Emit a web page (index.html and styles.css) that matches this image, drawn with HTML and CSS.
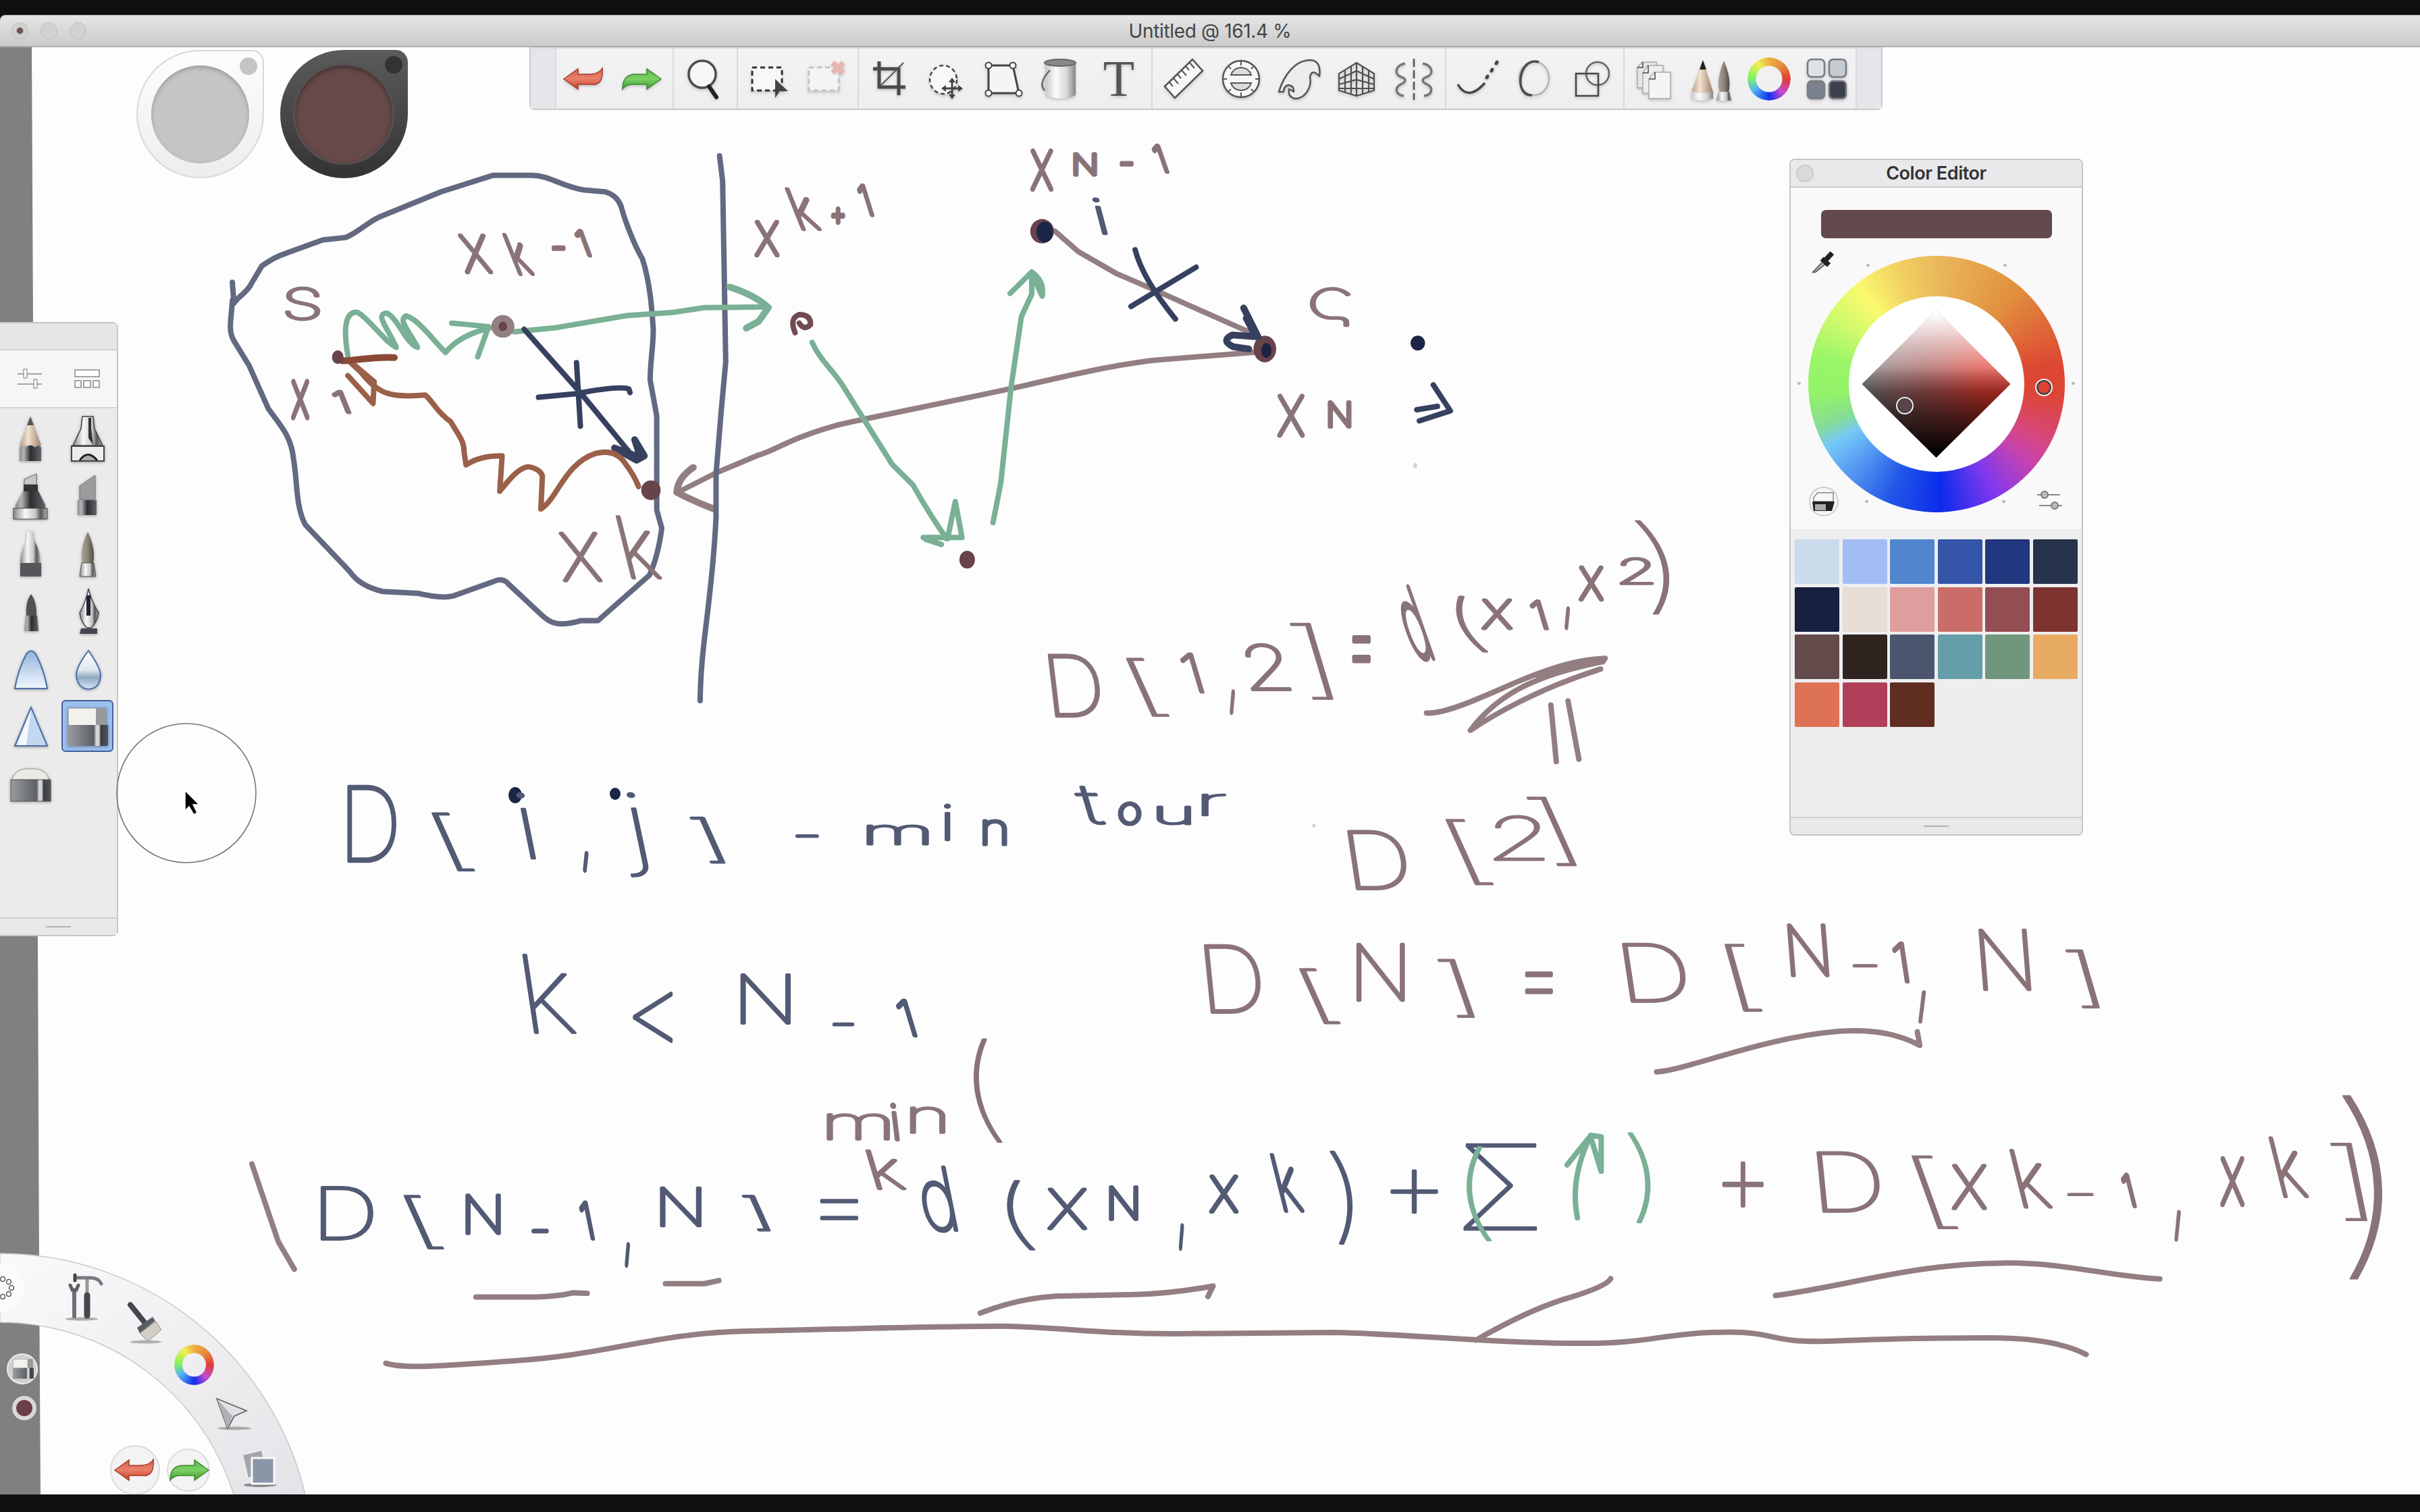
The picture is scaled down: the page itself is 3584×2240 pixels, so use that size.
FILE: index.html
```html
<!DOCTYPE html>
<html lang="en">
<head>
<meta charset="utf-8">
<title>Untitled @ 161.4 %</title>
<link rel="stylesheet" href="styles.css">
</head>
<body>
<svg class="defs" width="0" height="0" aria-hidden="true">
  <defs>
    <linearGradient id="red" x1="0" y1="0" x2="0" y2="1"><stop offset="0" stop-color="#d9604c"/><stop offset=".5" stop-color="#e8806a"/><stop offset="1" stop-color="#c93c2a"/></linearGradient>
    <linearGradient id="green" x1="0" y1="0" x2="0" y2="1"><stop offset="0" stop-color="#58b548"/><stop offset=".5" stop-color="#7cd064"/><stop offset="1" stop-color="#3c9a2c"/></linearGradient>
    <linearGradient id="metal"><stop offset="0" stop-color="#8a8a8c"/><stop offset=".35" stop-color="#f8f8f8"/><stop offset=".65" stop-color="#c6c6c8"/><stop offset=".8" stop-color="#58585a"/><stop offset="1" stop-color="#b0b0b2"/></linearGradient>
    <linearGradient id="can"><stop offset="0" stop-color="#c8c8ca"/><stop offset=".35" stop-color="#fbfbfb"/><stop offset=".7" stop-color="#d8d8da"/><stop offset="1" stop-color="#858587"/></linearGradient>
    <linearGradient id="dark"><stop offset="0" stop-color="#8b8d92"/><stop offset=".2" stop-color="#b4b4b6"/><stop offset=".5" stop-color="#2c2d30"/><stop offset="1" stop-color="#636468"/></linearGradient>
    <linearGradient id="rubber"><stop offset="0" stop-color="#9a9ca0"/><stop offset=".65" stop-color="#5c5f65"/><stop offset=".71" stop-color="#d8d8d8"/><stop offset=".78" stop-color="#d0d0d0"/><stop offset=".82" stop-color="#3c3e43"/><stop offset="1" stop-color="#4f5258"/></linearGradient>
    <linearGradient id="wood"><stop offset="0" stop-color="#b9a088"/><stop offset=".4" stop-color="#f2e2cf"/><stop offset="1" stop-color="#a07f66"/></linearGradient>
    <linearGradient id="hair"><stop offset="0" stop-color="#a9a196"/><stop offset=".5" stop-color="#8a8378"/><stop offset="1" stop-color="#4f4a44"/></linearGradient>
    <linearGradient id="blue" x1="0" y1="0" x2="0" y2="1"><stop offset="0" stop-color="#92b3dc"/><stop offset="1" stop-color="#f2f7fc"/></linearGradient>
    <linearGradient id="drop" x1="0" y1="0" x2="0" y2="1"><stop offset="0" stop-color="#ffffff"/><stop offset=".5" stop-color="#dfe8f0"/><stop offset=".7" stop-color="#8fa9c2"/><stop offset="1" stop-color="#dde9f5"/></linearGradient>
    <linearGradient id="band" x1="0" y1="0" x2="1" y2="1"><stop offset="0" stop-color="#fafafb"/><stop offset="1" stop-color="#e4e4e8"/></linearGradient>
    <symbol id="undo" viewBox="0 0 60 60"><path d="M1 30 L22 15 V23 H40 Q54 22 58 14 Q60 40 42 38 H22 V45 Z" fill="url(#red)" stroke="#a83a2c" stroke-width="1.5"/></symbol>
    <symbol id="redo" viewBox="0 0 60 60"><path d="M59 30 L38 15 V23 H20 Q2 24 2 45 Q8 37 20 38 H38 V45 Z" fill="url(#green)" stroke="#3c8a30" stroke-width="1.5"/></symbol>
    <symbol id="eraser" viewBox="0 0 60 60"><rect x="1" y="3" width="56" height="28" fill="#f3f1ec" stroke="#8a8a8a"/><rect x="42" y="3" width="15" height="28" fill="#99999b"/><rect y="28" width="60" height="31" fill="url(#rubber)"/></symbol>
  </defs>
</svg>

<main class="screen">
  <header class="titlebar">
    <div class="lights"><i class="light edited"></i><i class="light"></i><i class="light"></i></div>
    <h1 class="doc-title">Untitled @ 161.4 %</h1>
  </header>

  <section class="workspace">
    <svg class="sketch" viewBox="0 70 3584 2144">
      <path class="pasteboard" d="M0 70 H47 L49 480 L56 1400 L58 1880 L60 2214 H0 Z"/>
      <g transform="translate(1000 200) scale(.7653 .5485)">
        <path class="pen plum" d="M1120 587 L930 608 C850 620 760 650 650 685 C500 730 350 770 310 785 C220 820 190 855 160 865 L80 912 L5 965 M735 260 L780 315 L855 375 L930 420 L1120 538"/>
        <path class="pen plum bold" d="M35 898 Q5 925 3 965 Q40 992 75 1010"/>
        <path class="pen green" d="M265 560 C280 610 310 640 330 690 L420 890 L460 945 Q490 1020 525 1090 M480 1087 H555 L542 990 L527 1090 M485 1092 L515 1106 M615 1047 L630 940 L650 680 L670 490 L690 430 V370 M648 428 L690 370 Q715 395 710 435 L690 375"/>
      </g>
      <g transform="translate(320 220) scale(.574 .5357)">
        <path class="pen navy" d="M42 370 L46 428 C60 405 80 400 92 372 L118 325 Q150 300 180 290 L275 253 L335 246 C370 230 390 205 420 190 L580 120 L715 74 H815 C860 74 890 105 950 115 L1005 120 Q1035 130 1045 160 C1055 200 1080 270 1100 305 C1120 370 1125 450 1128 500 C1128 550 1120 590 1120 640 L1137 740 V1000 L1150 1050 Q1140 1130 1118 1180 L985 1306 H940 C880 1325 860 1310 840 1290 L755 1205 Q740 1185 715 1198 L610 1238 Q580 1245 520 1230 L430 1225 Q370 1210 345 1170 L230 1040 C205 990 210 920 200 860 C195 800 170 770 135 720 L85 600 L45 530 C30 500 40 470 42 420"/>
        <path class="pen navy" d="M1299 20 L1307 90 L1315 590 L1303 730 L1290 900 V1020 C1280 1250 1250 1370 1249 1527"/>
        <path class="pen green" d="M340 572 C325 480 340 450 365 453 C395 470 430 530 465 550 C440 490 410 460 440 455 C470 470 490 540 520 550 C495 500 470 475 490 463 C520 470 560 530 592 564 Q630 515 705 497 M608 483 L650 487 L703 493 L675 576 M770 507 L880 495 L1060 462 L1180 453 L1260 440 L1420 438"/>
        <path class="pen green bold" d="M1325 383 Q1390 405 1425 440 L1400 478 L1368 497"/>
        <path class="pen navy-dark" d="M795 500 L940 675 L1065 838 M930 592 L940 768 M832 688 L930 678 Q1040 655 1065 665 L1068 675"/>
        <path class="pen navy-dark bold" d="M1028 828 L1095 855 L1080 805 L1105 850 L1085 862 Z"/>
        <path class="pen brown" d="M345 590 L375 620 C420 680 450 690 540 682 C560 700 570 730 605 755 C630 800 640 810 640 840 L645 875 C680 850 720 850 738 850 L732 948 C760 910 780 885 805 880 Q835 885 842 905 L838 997 C880 970 900 870 980 843 Q1030 830 1055 870 Q1080 905 1090 935 M340 628 L405 705 L408 645 L345 588"/>
        <path class="pen brown bold" d="M460 578 C400 575 360 587 325 587"/>
        <ellipse class="pen plum bold" cx="740" cy="492" rx="21" ry="22"/>
        <ellipse class="dot plum-dark" cx="740" cy="492" rx="12" ry="13"/>
        <ellipse class="dot plum-dark" cx="314" cy="577" rx="15" ry="19"/>
        <ellipse class="dot plum-dark" cx="1122" cy="945" rx="25" ry="27"/>
      </g>
      <g transform="translate(1000 200) scale(.7653 .5485)">
        <path class="pen plum-dark" d="M232 534 Q220 495 240 485 Q262 485 262 512 Q250 530 240 508"/>
        <ellipse class="dot plum-dark" cx="565" cy="1147" rx="15" ry="24"/>
        <ellipse class="dot plum-dark" cx="710" cy="260" rx="23" ry="33"/>
        <ellipse class="dot navy-dark" cx="715" cy="262" rx="16" ry="28"/>
        <ellipse class="dot plum-dark" cx="1141" cy="578" rx="22" ry="36"/>
        <ellipse class="dot navy-dark" cx="1144" cy="582" rx="10" ry="20"/>
        <ellipse class="dot navy-dark" cx="1437" cy="562" rx="14" ry="20"/>
        <ellipse class="dot faint" cx="1432" cy="893" rx="4" ry="7"/>
        <path class="pen navy-dark" d="M890 310 Q905 390 968 497 M882 463 L1008 357 M1435 742 L1475 733 M1440 772 L1500 745 L1467 675"/>
        <path class="pen navy-dark bold" d="M1100 467 L1128 545 L1078 540 Q1055 555 1080 572 L1110 578 M1105 495 L1120 535"/>
      </g>
      <path class="pen plum" transform="translate(1500 740) scale(.6696 .3954)" d="M915 800 C960 805 1050 730 1120 680 C1200 625 1250 600 1310 595 L1305 608 C1180 650 1080 710 1012 865 C1060 810 1160 710 1300 635 M1160 660 Q1240 615 1300 602 M1190 770 L1202 982 M1228 755 L1252 973"/>
      <path class="pen plum" transform="translate(360 1500) scale(1.0842 .3571)" d="M195 1455 C220 1480 280 1465 370 1445 C500 1420 560 1330 690 1322 C850 1310 1000 1300 1050 1302 C1130 1310 1170 1333 1275 1333 M318 1180 H400 Q430 1178 450 1163 L470 1165 M577 1125 H630 L650 1112 M1007 1247 Q1060 1185 1110 1177 L1220 1170 Q1270 1165 1325 1135 L1318 1178 M12 628 L48 950 L70 1065"/>
      <g transform="translate(1740 1320) scale(1.1735 .4719)">
        <path class="pen plum" d="M0 1390 L200 1386 C290 1390 400 1420 520 1420 C600 1420 620 1385 700 1385 C760 1385 750 1420 830 1413 C900 1405 960 1403 1030 1403 Q1110 1403 1150 1455 M608 568 C650 560 740 460 840 440 Q900 430 940 485 L937 442 M758 1270 C850 1240 930 1170 1045 1168 C1120 1165 1180 1210 1243 1218 M380 1410 Q450 1310 500 1275 Q545 1240 550 1217"/>
        <path class="pen green" d="M508 1026 Q498 900 525 767 L495 860 M525 767 L538 772 V880 L525 775"/>
      </g>
      <ellipse class="dot navy-dark" cx="763" cy="1178" rx="10" ry="12"/>
      <ellipse class="dot navy-dark" cx="911" cy="1176" rx="8" ry="9"/>
      <ellipse class="dot faint" cx="1946" cy="1223" rx="2.5" ry="3"/>
      <g id="writing" transform="scale(2.2857)"></g>
    </svg>

    <div class="puck puck-light"><i class="puck-dot"></i><i class="puck-well"></i></div>
    <div class="puck puck-dark"><i class="puck-dot"></i><i class="puck-well"></i></div>

    <nav class="toolbar">
      <div class="grip"></div>
      <div class="group g1">
        <svg viewBox="0 0 64 64"><use href="#undo" x="2" y="2" width="60" height="60"/></svg>
        <svg viewBox="0 0 64 64"><use href="#redo" x="2" y="2" width="60" height="60"/></svg>
      </div>
      <div class="group g2">
        <svg viewBox="0 0 64 64"><circle cx="30" cy="25" r="20" fill="#f6f6f8" stroke="#4c4c4c" stroke-width="3.5"/><path d="M40 43 L51 59" stroke="#222" stroke-width="6" stroke-linecap="round"/></svg>
      </div>
      <div class="group g3">
        <svg viewBox="0 0 64 64"><rect x="9" y="15" width="44" height="34" fill="#f8f8f8" stroke="#333" stroke-width="3" stroke-dasharray="7 5"/><path d="M43 32 V60 L50 50 H62 Z" fill="#444"/></svg>
        <svg viewBox="0 0 64 64"><rect x="8" y="15" width="44" height="34" fill="#f4f4f4" stroke="#c4c4c4" stroke-width="3" stroke-dasharray="7 5"/><path d="M43 8 L59 23 M59 8 L43 23" stroke="#e5b6b2" stroke-width="8"/></svg>
      </div>
      <div class="group g4">
        <svg viewBox="0 0 64 64"><path d="M18 6 V44 H57 M9 17 H47 V56" fill="none" stroke="#4a4a4a" stroke-width="5"/><path d="M20 42 L54 8" stroke="#555" stroke-width="2"/></svg>
        <svg viewBox="0 0 64 64"><ellipse cx="27" cy="33" rx="20" ry="21" fill="#f8f8f8" stroke="#444" stroke-width="2.5" stroke-dasharray="6 4"/><path d="M40 32 V60 M26 46 H54" stroke="#444" stroke-width="3"/><path d="M40 30 L35 37 H45Z M40 62 L35 55 H45Z M24 46 L31 41 V51Z M56 46 L49 41 V51Z" fill="#444"/></svg>
        <svg viewBox="0 0 64 64"><path d="M9 12 H45 L54 53 H9 Z" fill="#f5f5f6" stroke="#444" stroke-width="3"/><g fill="#fff" stroke="#444" stroke-width="2"><circle cx="9" cy="12" r="4.5"/><circle cx="45" cy="12" r="4.5"/><circle cx="54" cy="53" r="4.5"/><circle cx="9" cy="53" r="4.5"/></g></svg>
        <svg viewBox="0 0 64 64"><path d="M8 8 V56 Q30 66 53 56 V8 Z" fill="url(#can)"/><ellipse cx="30" cy="8" rx="23" ry="5" fill="#888" stroke="#666" stroke-width="2"/><path d="M15 19 Q-3 38 7 49" fill="none" stroke="#666" stroke-width="2.5"/></svg>
        <svg viewBox="0 0 64 64"><text class="type-glyph" x="31" y="57" text-anchor="middle">T</text></svg>
      </div>
      <div class="group g5">
        <svg viewBox="0 0 64 64"><path d="M4 43 L45 3 L60 20 L19 60 Z" fill="#f8f8f8" stroke="#555" stroke-width="2.5"/><path d="M11 37 l5 6 M17 31 l7 8 M23 25 l5 6 M29 19 l7 8 M35 13 l5 6 M41 8 l7 8" stroke="#555" stroke-width="2"/></svg>
        <svg viewBox="0 0 64 64"><circle cx="32" cy="32" r="27" fill="#f7f7f8" stroke="#555" stroke-width="2.5"/><path d="M17 26 Q20 16 32 15 Q44 16 47 26 Z M17 38 Q20 48 32 49 Q44 48 47 38 Z" fill="#ddd" stroke="#555" stroke-width="2"/><path d="M32 6 V12 M32 52 V58 M6 32 H11 M53 32 H58 M14 14 l3 3 M50 14 l-3 3 M14 50 l3 -3 M50 50 l-3 -3" stroke="#555" stroke-width="2"/></svg>
        <svg viewBox="0 0 64 64"><path d="M3 51 C10 28 26 4 50 4 Q66 5 63 28 C56 20 50 20 49 30 C52 42 43 62 26 61 Q16 58 18 47 L25 51 Q26 42 17 41 Q10 43 10 51 Z" fill="#ececee" stroke="#555" stroke-width="2.5" stroke-linejoin="round"/></svg>
        <svg viewBox="0 0 64 64"><path d="M32 8 L58 24 V49 L32 57 L6 49 V24 Z M32 8 V57 M15 20 V51 M24 14 V54 M41 14 V54 M50 20 V51 M6 32 L32 20 L58 32 M6 40 L32 33 L58 40 M6 46 H58" fill="none" stroke="#505052" stroke-width="2.2"/></svg>
        <svg viewBox="0 0 64 64"><path d="M19 9 C4 12 2 25 13 29 C22 32 20 37 12 40 C2 46 6 56 17 57 M45 9 C60 12 62 25 51 29 C42 32 44 37 52 40 C62 46 58 56 47 57" fill="none" stroke="#777" stroke-width="3.5"/><path d="M32 2 V63" stroke="#555" stroke-width="2.5" stroke-dasharray="12 5"/></svg>
      </div>
      <div class="group g6">
        <svg viewBox="0 0 64 64"><path d="M3 40 Q18 66 43 38" fill="none" stroke="#444" stroke-width="3.5"/><path d="M46 30 L47 28 M53 20 L54 18 M60 9 L61 7" stroke="#444" stroke-width="5" stroke-linecap="round"/></svg>
        <svg viewBox="0 0 64 64"><ellipse cx="31" cy="31" rx="22" ry="25" fill="none" stroke="#aaa" stroke-width="2"/><path d="M38 7 C8 -2 0 58 28 56" fill="none" stroke="#4c4c4e" stroke-width="3.5"/></svg>
        <svg viewBox="0 0 64 64"><circle cx="40" cy="24" r="17" fill="none" stroke="#666" stroke-width="2.5"/><rect x="8" y="24" width="33" height="33" fill="none" stroke="#444" stroke-width="2.5"/></svg>
      </div>
      <div class="group g7">
        <svg viewBox="0 0 64 64"><g stroke="#aaa" stroke-width="1.5"><path d="M8 15 L15 7 H36 V45 H8Z" fill="#e5e5e8"/><path d="M16 23 L23 12 H46 V53 H16Z" fill="#ededf0"/><path d="M25 32 L33 22 H57 V61 H25Z" fill="#f5f5f8"/></g><path d="M8 15 h8 V7 M16 23 h8 V12 M25 32 h9 V22" fill="none" stroke="#444" stroke-width="1.5"/></svg>
        <svg viewBox="0 0 64 64"><path d="M19 4 L2 51 Q2 62 18 64 Q33 63 34 51 Z" fill="url(#wood)"/><path d="M19 4 L14 18 H24 Z" fill="#222"/><path d="M2 50 Q18 56 34 50 V61 Q18 67 2 61Z" fill="url(#can)"/><path d="M50 5 Q38 35 44 52 H57 Q62 33 50 5Z" fill="url(#hair)"/><path d="M42 51 H58 L62 64 H39Z" fill="url(#metal)"/></svg>
        <i class="hue-ring"></i>
        <svg viewBox="0 0 64 64"><g stroke="#777b80" stroke-width="2.5"><rect x="4" y="3" width="25" height="26" rx="6" fill="#dfe3e5"/><rect x="36" y="3" width="25" height="26" rx="6" fill="#c5cbd0"/><rect x="4" y="35" width="25" height="26" rx="6" fill="#7b828d"/><rect x="36" y="35" width="25" height="26" rx="6" fill="#3c404b"/></g></svg>
      </div>
      <div class="grip"></div>
    </nav>

    <aside class="brushes">
      <div class="brushes-head"></div>
      <div class="brushes-tabs">
        <svg viewBox="0 0 40 32"><path d="M2 9 H38 M2 24 H38" stroke="#8a8a8a" stroke-width="1.5"/><rect x="11" y="2" width="5" height="13" fill="#fff" stroke="#777"/><rect x="26" y="17" width="5" height="13" fill="#fff" stroke="#777"/></svg>
        <svg viewBox="0 0 40 32"><g fill="#fff" stroke="#888" stroke-width="1.5"><rect x="2" y="3" width="36" height="10"/><rect x="2" y="19" width="9" height="10"/><rect x="15" y="19" width="10" height="10"/><rect x="29" y="19" width="9" height="10"/></g></svg>
      </div>
      <div class="brushes-grid">
        <div class="cell"><svg viewBox="0 0 64 70"><path d="M32 2 L16 45 H48Z" fill="url(#wood)"/><path d="M32 2 L27 15 H37Z" fill="#555"/><path d="M16 48 Q21 42 25 48 Q32 41 39 48 Q44 42 48 48 V68 H16Z" fill="url(#dark)"/></svg></div>
        <div class="cell"><svg viewBox="0 0 64 70"><path d="M24 2 H40 L42 20 L54 45 H10 L22 20Z" fill="url(#metal)" stroke="#444" stroke-width="1.5"/><path d="M33 4 V34 L40 44 L37 20 V4Z" fill="#333"/><path d="M8 46 H56 V68 H8Z" fill="#ececec" stroke="#444" stroke-width="2"/><path d="M20 67 Q32 50 46 67" fill="#aaa" stroke="#222" stroke-width="3"/></svg></div>
        <div class="cell"><svg viewBox="0 0 64 70"><path d="M23 10 L41 2 V18 H23Z" fill="#c9c8c0" stroke="#666"/><path d="M22 18 H43 V28 H22Z" fill="#333"/><path d="M21 28 H44 L54 48 V53 H10 V48Z" fill="url(#dark)"/><path d="M7 53 H57 V69 H7Z" fill="url(#metal)" stroke="#444"/></svg></div>
        <div class="cell"><svg viewBox="0 0 64 70"><path d="M20 20 L43 4 V40 H20Z" fill="#9a9c9e" stroke="#777"/><path d="M17 41 H45 V63 H17Z" fill="url(#dark)"/></svg></div>
        <div class="cell"><svg viewBox="0 0 64 70"><path d="M27 2 H36 L38 16 Q47 32 47 50 H17 Q17 32 26 16Z" fill="url(#metal)"/><path d="M17 49 H48 V69 H17Z" fill="#55565a"/></svg></div>
        <div class="cell"><svg viewBox="0 0 64 70"><path d="M32 3 Q20 28 24 49 H40 Q44 28 32 3Z" fill="url(#hair)"/><path d="M23 49 H41 L44 69 H20Z" fill="url(#metal)" stroke="#555"/></svg></div>
        <div class="cell"><svg viewBox="0 0 64 70"><path d="M33 10 Q24 22 26 43 H41 Q42 22 33 10Z" fill="#505256"/><path d="M25 42 H42 L44 65 H23Z" fill="url(#dark)"/></svg></div>
        <div class="cell"><svg viewBox="0 0 64 70"><path d="M33 2 Q30 20 20 38 Q22 52 31 60 H37 Q46 52 48 38 Q37 20 33 2Z" fill="url(#metal)" stroke="#445" stroke-width="1.5"/><path d="M33 12 V42" stroke="#223" stroke-width="6"/><path d="M22 61 H46 V69 H20Z" fill="#45464f"/></svg></div>
        <div class="cell"><svg viewBox="0 0 64 70"><path d="M9 64 Q14 36 26 13 Q33 4 40 13 Q52 36 57 64Z" fill="url(#blue)" stroke="#4a6ea8" stroke-width="2"/></svg></div>
        <div class="cell"><svg viewBox="0 0 64 70"><path d="M33 8 Q15 32 15 44 Q17 64 33 65 Q50 64 51 44 Q50 32 33 8Z" fill="url(#drop)" stroke="#4a6ea8" stroke-width="2"/></svg></div>
        <div class="cell"><svg viewBox="0 0 64 70"><path d="M33 7 L9 64 H57Z" fill="#c3d7f0" stroke="#4a6ea8" stroke-width="2"/><path d="M33 10 L12 63 H26Z" fill="#f4f8fd"/></svg></div>
        <div class="cell selected"><svg viewBox="0 0 64 70"><use href="#eraser" x="2" y="5" width="60" height="60"/></svg></div>
        <div class="cell"><svg viewBox="0 0 64 70"><path d="M4 30 Q10 14 25 13 H40 Q56 15 60 30Z" fill="#eceae6" stroke="#999"/><rect x="3" y="29" width="59" height="32" fill="url(#rubber)" stroke="#555"/></svg></div>
      </div>
      <div class="panel-foot"></div>
    </aside>

    <svg class="brush-cursor" viewBox="0 0 210 210"><circle cx="105" cy="105" r="103" fill="none" stroke="#777" stroke-width="1.6"/><path d="M103 101 V131 L109 125 L116 137 L121 134 L115 122 H124 Z" fill="#000" stroke="#fff" stroke-width="1.5"/></svg>

    <section class="editor">
      <header class="editor-head"><i class="editor-close"></i><h2>Color Editor</h2></header>
      <div class="mixer">
        <div class="current"></div>
        <svg class="mix-icon dropper" viewBox="0 0 40 40"><path d="M3 35 L20 17 L24 21 L7 35 Z" fill="#bbb" stroke="#666" stroke-width="2"/><path d="M17 14 L28 24 M22 17 L33 5" stroke="#222" stroke-width="8"/></svg>
        <div class="wheel"><div class="wheel-hole"><div class="diamond"></div></div><i class="knob knob-hue"></i><i class="knob knob-tone"></i></div>
        <svg class="mix-icon clear" viewBox="0 0 48 48"><circle cx="24" cy="24" r="21" fill="#f6f6f6" stroke="#ccc" stroke-width="2"/><path d="M9 18 L15 11 H38 V24 H9Z" fill="#f7f7f7" stroke="#888" stroke-width="1.5"/><path d="M7 24 H40 L36 38 H9Z" fill="#222"/><path d="M11 28 H27 V37 H11Z" fill="#aaa"/></svg>
        <svg class="mix-icon sliders" viewBox="0 0 40 36"><path d="M2 9 H36 M5 25 H39" stroke="#8a8a8a" stroke-width="2"/><circle cx="13" cy="9" r="5" fill="#bbb" stroke="#777" stroke-width="2"/><circle cx="28" cy="25" r="5" fill="#bbb" stroke="#777" stroke-width="2"/></svg>
        <i class="tick t1"></i><i class="tick t2"></i><i class="tick t3"></i><i class="tick t4"></i><i class="tick t5"></i><i class="tick t6"></i>
      </div>
      <div class="swatches">
        <i style="background:#cbdbec"></i><i style="background:#a2bcf5"></i><i style="background:#5186ce"></i><i style="background:#3455a8"></i><i style="background:#20367d"></i><i style="background:#27334a"></i>
        <i style="background:#17203f"></i><i style="background:#e8dcd7"></i><i style="background:#df9d9d"></i><i style="background:#ca6d68"></i><i style="background:#934d53"></i><i style="background:#7d3430"></i>
        <i style="background:#634a4b"></i><i style="background:#302421"></i><i style="background:#4b566e"></i><i style="background:#659ea8"></i><i style="background:#70977c"></i><i style="background:#e7ac62"></i>
        <i style="background:#de7256"></i><i style="background:#b0405a"></i><i style="background:#602e20"></i>
      </div>
      <div class="panel-foot"></div>
    </section>

    <svg class="lagoon" viewBox="0 1850 470 364">
      <path d="M0 1857 A465 465 0 0 1 452 2214 H346 A363 363 0 0 0 0 1959 Z" fill="url(#band)" stroke="#c9c9cc" stroke-width="1.5"/>
      <circle cx="-2" cy="1908" r="37" fill="#fbfbfb"/>
      <g fill="#fff" stroke="#555" stroke-width="1.5"><circle cx="4" cy="1895" r="3.5"/><circle cx="13" cy="1899" r="3.5"/><circle cx="17" cy="1908" r="3.5"/><circle cx="13" cy="1917" r="3.5"/><circle cx="4" cy="1921" r="3.5"/></g>
      <g stroke-linecap="round"><ellipse cx="121" cy="1954" rx="24" ry="2.5" fill="#aaa"/><path d="M110 1912 V1950" stroke="#6d7077" stroke-width="6"/><path d="M104 1904 L107 1911 H113 L116 1904" fill="none" stroke="#5d6066" stroke-width="5"/><path d="M129 1894 V1915" stroke="#999" stroke-width="5"/><path d="M129 1919 V1949" stroke="#45474c" stroke-width="9"/><path d="M112 1893 H134 Q146 1893 150 1902" fill="none" stroke="#777a80" stroke-width="5"/><path d="M111 1889 V1897" stroke="#444" stroke-width="5"/></g>
      <ellipse cx="216" cy="1988" rx="23" ry="2.5" fill="#b0b0b0"/><path d="M193 1933 L214 1959" stroke="#45474c" stroke-width="8" stroke-linecap="round"/><path d="M203 1967 L226 1951 L230 1957 L207 1975Z" fill="#5a5e66"/><path d="M207 1975 L231 1958 L239 1970 L219 1987Z" fill="#d2cfc5" stroke="#8b8982"/>
      <foreignObject x="258" y="1992" width="60" height="64"><i class="hue-ring small"></i></foreignObject>
      <ellipse cx="347" cy="2116" rx="25" ry="2.5" fill="#aaa"/><path d="M321 2072 L365 2090 L347 2098 L337 2116 Z" fill="#dfe0e2" stroke="#666" stroke-width="1.8"/><path d="M321 2072 L344 2098 L337 2116Z" fill="#aeb0b4"/>
      <ellipse cx="385" cy="2200" rx="24" ry="3" fill="#888"/><path d="M359 2155 L388 2148 L396 2185 L367 2190Z" fill="#a3a5ab" stroke="#eee" stroke-width="2"/><path d="M373 2160 H406 V2198 H373Z" fill="#8a95a8" stroke="#fafafa" stroke-width="3"/>
      <circle cx="33" cy="2028" r="22" fill="#d0d0d0" stroke="#ececec" stroke-width="2"/><use href="#eraser" x="19" y="2012" width="31" height="31"/>
      <circle cx="36" cy="2086" r="15" fill="#6b3f45" stroke="#dcd7d9" stroke-width="6"/>
      <circle cx="200" cy="2178" r="36" fill="#f3f3f4" stroke="#dcdcdc" stroke-width="2"/><use href="#undo" x="169" y="2148" width="60" height="60"/>
      <circle cx="279" cy="2178" r="31" fill="#f3f3f4" stroke="#dcdcdc" stroke-width="2"/><use href="#redo" x="250" y="2148" width="60" height="60"/>
    </svg>
  </section>
</main>
<script src="ink.js"></script>
</body>
</html>
```
FILE: styles.css
```css
* { box-sizing: border-box; }
body { margin: 0; background: #101010; font-family: Inter, "Liberation Sans", sans-serif; }
h1, h2 { margin: 0; }
i { display: block; }
.defs { position: absolute; }

.screen { width: 3584px; height: 2240px; padding: 22px 0 26px; display: flex; flex-direction: column; overflow: hidden; background: #101010; }
.titlebar { height: 48px; flex: none; display: flex; align-items: center; justify-content: center; position: relative; background: linear-gradient(#e6e5e6, #cccbcc); border-top: 1px solid #aaa; border-bottom: 2px solid #adadad; border-radius: 8px 0 0 0; }
.lights { position: absolute; left: 17px; top: 10px; display: flex; gap: 18px; }
.light { width: 25px; height: 25px; border: 1.5px solid #bdbcbd; border-radius: 50%; background: #d3d2d3; }
.light.edited { background: radial-gradient(circle, #6b5650 0 4px, #d3d2d3 5.5px); }
.doc-title { font-size: 28px; font-weight: 400; color: #454545; letter-spacing: -.35px; white-space: nowrap; }

.workspace { position: relative; flex: 1; background: #fdfdfe; overflow: hidden; }
.sketch { position: absolute; left: 0; top: 0; width: 3584px; height: 2144px; }
.pasteboard { fill: #808080; }
.pen { fill: none; stroke-width: 8; stroke-linecap: round; stroke-linejoin: round; vector-effect: non-scaling-stroke; }
.pen.bold { stroke-width: 10; }
.pen.navy { stroke: #626980; }
.pen.navy-dark { stroke: #36405f; }
.pen.plum { stroke: #937e81; }
.pen.plum-dark { stroke: #704c52; }
.pen.green { stroke: #7ab095; }
.pen.brown { stroke: #9a6049; }
.pen.brown.bold { stroke: #8a4a34; }
.dot.plum-dark { fill: #68434a; }
.dot.navy-dark { fill: #1c2546; }
.dot.faint { fill: #d4d4dc; }
.hand { font-family: Inter, Roboto, sans-serif; font-size: 100px; font-weight: 100; stroke-linejoin: round; stroke-linecap: round; }
.hand.n { fill: #525a74; stroke: #525a74; }
.hand.p { fill: #8a7377; stroke: #8a7377; }
.hand.g { fill: #7ab095; stroke: #7ab095; }

.puck { position: absolute; top: 4px; width: 189px; height: 190px; border-radius: 50% 18px 50% 50%; }
.puck-light { left: 202px; background: linear-gradient(#fdfdfd, #ededee); border: 2px solid #d8d8d8; }
.puck-dark { left: 415px; background: linear-gradient(#5b5b5b, #333); }
.puck-dot { position: absolute; right: 8px; top: 9px; width: 26px; height: 26px; border-radius: 50%; background: #c5c5c6; }
.puck-well { position: absolute; left: 20px; top: 21px; width: 145px; height: 145px; border-radius: 50%; background: #c7c4c7; box-shadow: inset 0 3px 6px #999; }
.puck-dark .puck-dot { background: #333; }
.puck-dark .puck-well { left: 19px; top: 20px; width: 150px; height: 150px; background: #664949; border: 3px solid #555051; box-shadow: inset 0 3px 6px #402e30; }

.toolbar { position: absolute; left: 784px; top: 0; width: 2004px; height: 93px; display: flex; background: linear-gradient(#f3f3f4, #eeeef0); border: 2px solid #c9c9cb; border-top-color: #dadada; border-radius: 0 0 8px 8px; }
.grip { width: 36px; background: #e6e6ea; }
.group { display: flex; align-items: center; justify-content: center; border-left: 2px solid #d9d9da; }
.group:nth-last-child(2) { border-right: 2px solid #d9d9da; }
.group > svg { width: 64px; height: 64px; margin: 0 10.7px; flex: none; overflow: visible; filter: drop-shadow(0 2px 2px #0003); }
.g1 { width: 174px; padding-right: 6px; } .g2 { width: 95px; padding-right: 4px; } .g3 { width: 179px; padding-right: 4px; } .g4 { width: 436px; padding-right: 3px; }
.g5 { width: 435px; } .g6 { width: 265px; } .g7 { width: 346px; }
.type-glyph { font-family: "Liberation Serif", serif; font-size: 76px; fill: #555; }
.hue-ring { width: 64px; height: 64px; margin: 0 10.7px; flex: none; border-radius: 50%; background: conic-gradient(#ecb040, #e58a40 45deg, #df3d34 90deg, #c84bd0 135deg, #1030ee 180deg, #58b6f0 235deg, #84f458 275deg, #f1ee54 325deg, #ecb040); mask: radial-gradient(circle, transparent 19px, #000 20px); }
.hue-ring.small { width: 59px; height: 60px; margin: 0; mask: radial-gradient(circle, transparent 17px, #000 18px); }

.brushes { position: absolute; left: 0; top: 407px; width: 175px; height: 910px; display: flex; flex-direction: column; background: #ebebec; border: 2px solid #c6c6c8; border-left: 0; border-radius: 0 8px 8px 0; }
.brushes-head { height: 40px; background: #e6e6e8; border-bottom: 2px solid #cfcfd1; }
.brushes-tabs { height: 86px; padding: 0 24px; display: flex; align-items: center; justify-content: space-between; background: #f6f6f7; border-bottom: 2px solid #d4d4d6; }
.brushes-tabs svg { width: 40px; height: 32px; }
.brushes-grid { flex: 1; display: grid; grid-template-columns: 77px 77px; grid-auto-rows: 77px; gap: 8.3px 8px; padding: 6px 0 0 6px; align-content: start; }
.cell { display: flex; align-items: center; justify-content: center; border-radius: 6px; }
.cell svg { width: 64px; height: 70px; filter: drop-shadow(0 1px 2px #0005); }
.cell.selected { background: #9bbfee; border: 2.5px solid #3f6297; }
.panel-foot { height: 26px; flex: none; margin-top: auto; display: flex; align-items: center; justify-content: center; border-top: 2px solid #cfcfd1; background: #e9e9ec; }
.panel-foot::after { content: ""; width: 37px; height: 2px; background: #b2b2b4; }

.brush-cursor { position: absolute; left: 171px; top: 1000px; width: 210px; height: 210px; }

.editor { position: absolute; left: 2650px; top: 165px; width: 435px; height: 1003px; display: flex; flex-direction: column; background: #eeeef0; border: 2px solid #c5c5c7; border-radius: 8px; overflow: hidden; }
.editor-head { height: 41px; flex: none; display: flex; align-items: center; justify-content: center; position: relative; border-bottom: 2px solid #c9c9cb; background: #e9e9eb; }
.editor-head h2 { font-size: 27px; font-weight: 600; color: #333; letter-spacing: -.45px; white-space: nowrap; }
.editor-close { position: absolute; left: 8px; top: 7px; width: 26px; height: 26px; border-radius: 50%; background: #dadadb; border: 2px solid #cacacc; }
.mixer { height: 508px; flex: none; position: relative; background: #f9f9fa; border-bottom: 2px solid #e9e9ea; padding-top: 33px; display: flex; flex-direction: column; align-items: center; gap: 26px; }
.current { width: 342px; height: 42px; border-radius: 7px; background: #624a4c; }
.wheel { width: 380px; height: 380px; border-radius: 50%; position: relative; display: grid; place-items: center; background: conic-gradient(#eab95c, #e1903f 40deg, #dd4832 80deg, #dc4634 95deg, #d6477f 118deg, #c643ae 130deg, #8038ee 152deg, #0c2cec 178deg, #2259e8 203deg, #4e8cf0 220deg, #74c8f8 240deg, #86dc96 250deg, #93f268 265deg, #9af568 283deg, #cdfa6c 302deg, #fbf96e 321deg, #f1d062 342deg, #eab95c); }
.wheel-hole { width: 260px; height: 260px; border-radius: 50%; background: #fff; display: grid; place-items: center; }
.diamond { width: 220px; height: 218px; clip-path: polygon(50% 0, 100% 50%, 50% 100%, 0 50%); background: linear-gradient(to top, #000 2%, #0009 30%, #0000 62%), linear-gradient(to bottom, #fff 2%, #fff0 56%), linear-gradient(to right, #777, #a3504e 45%, #dd3a2e 80%); }
.knob { position: absolute; width: 26px; height: 26px; border-radius: 50%; border: 2px solid #eee; box-shadow: inset 0 0 0 2.5px #444; }
.knob-hue { left: 336px; top: 182px; background: #dd4431; }
.knob-tone { left: 130px; top: 209px; background: #5c4547; }
.mix-icon { position: absolute; }
.dropper { left: 30px; top: 92px; width: 38px; height: 38px; }
.clear { left: 25px; top: 441px; width: 48px; height: 48px; }
.sliders { left: 363px; top: 446px; width: 40px; height: 36px; }
.tick { position: absolute; width: 5px; height: 4px; border-radius: 2px; background: #b5b5b7; }
.t1 { left: 112px; top: 113px; } .t2 { left: 315px; top: 113px; } .t3 { left: 10px; top: 288px; }
.t4 { left: 416px; top: 288px; } .t5 { left: 110px; top: 463px; } .t6 { left: 313px; top: 463px; }
.swatches { display: grid; grid-template-columns: repeat(6, 66px); grid-auto-rows: 66px; gap: 4.5px; padding: 13px 0 0 6px; }
.swatches i { border-radius: 2px; }

.lagoon { position: absolute; left: 0; top: 1780px; width: 470px; height: 364px; }
```
FILE: ink.js
```js
// Each entry: character, left, top, right, bottom of the written mark, pen colour, optional slant.
const marks = [
  ['X',296,151,320,178,'p',.2],['k',325,151,347,179,'p',.4],['-',357,159,367,162,'p'],['1',371,148,384,167,'p',.4],
  ['S',184,185,208,209,'p'],['X',188,246,201,272,'p'],['1',214,252,228,269,'p',.4],
  ['X',361,344,391,378,'p',.1],['k',398,333,430,376,'p',.25],
  ['x',488,142,506,167,'p'],['k',508,121,533,150,'p',.4],['+',538,134,548,146,'p'],['1',554,119,567,141,'p',.4],
  ['X',667,96,683,124,'p'],['N',695,98,711,115,'p'],['-',725,104,735,107,'p'],['1',745,93,758,113,'p',.4],
  ['i',707,127,719,153,'n',.2],['ς',848,185,876,213,'p'],['X',827,255,846,284,'p'],['N',860,259,876,278,'p'],
  ['D',678,423,716,466,'p',.12],['[',727,425,760,466,'p',.3],['1',763,422,781,450,'p',.3],[',',796,448,801,463,'p'],['2',804,416,838,449,'p',.2],[']',834,402,866,455,'p',.3],['=',875,412,889,430,'p'],
  ['d',900,379,931,429,'p',.35],['(',937,385,965,424,'p',.5],['x',959,387,981,409,'p'],['1',990,388,1004,409,'p',.3],[',',1013,394,1018,408,'p'],['x',1022,366,1040,390,'p'],['2',1049,360,1072,380,'p'],[')',1057,336,1088,400,'p',.15],
  ['D',872,537,915,578,'p',.15],['[',932,529,972,575,'p',.35],['2',967,527,1002,559,'p'],[']',987,515,1024,563,'p',.3],
  ['D',224,508,258,560,'n'],['[',275,525,312,566,'n',.2],['i',333,512,350,558,'n',.2],[',',377,552,382,565,'n'],['j',396,512,424,570,'n',.2],[']',442,528,475,561,'n',.15],['-',515,540,531,543,'n'],
  ['m',561,533,602,549,'n'],['i',611,520,617,546,'n'],['n',636,530,653,549,'n'],['t',694,508,718,536,'n',.3],['o',724,519,740,536,'n'],['u',749,521,772,536,'n'],['r',778,513,795,530,'n'],
  ['k',337,617,375,671,'n',.15],['<',409,642,437,677,'n'],['N',479,630,513,665,'n'],['-',539,662,554,665,'n'],['1',579,647,595,673,'n',.3],
  ['m',535,720,577,740,'p'],['i',576,714,584,740,'p',.2],['n',589,716,613,736,'p'],['k',560,744,588,772,'p',.3],['(',625,672,651,742,'p',.15],
  ['D',207,768,243,805,'n'],['[',260,773,289,811,'n',.2],['N',301,773,325,801,'n'],['-',344,796,356,799,'n'],['1',374,778,386,804,'n',.2],[',',404,806,409,821,'n'],['N',427,768,455,796,'n'],[']',477,773,503,799,'n',.15],['=',530,776,557,792,'n'],
  ['d',592,755,622,800,'n',.2],['(',647,764,672,812,'n',.2],['X',678,769,705,798,'n'],['N',718,768,738,792,'n'],[',',763,794,768,810,'n'],['X',783,761,803,787,'n'],['k',822,747,846,786,'n',.25],[')',860,745,880,808,'n',.1],
  ['D',779,611,820,658,'p',.1],['[',840,626,870,665,'p',.15],['N',878,610,911,650,'p'],[']',930,620,957,661,'p',.2],['=',987,629,1007,645,'p'],
  ['D',1050,610,1096,651,'p',.15],['[',1116,610,1143,657,'p',.05],['N',1157,598,1186,634,'p',.08],['-',1200,624,1217,627,'p'],['1',1225,610,1238,638,'p',.15],[',',1242,642,1249,664,'p'],['N',1281,601,1317,643,'p',.08],[']',1337,614,1362,655,'p',.2],
  ['+',900,757,933,788,'n'],['Σ',947,740,997,799,'n'],['(',946,742,968,806,'g',.1],[')',1053,733,1073,794,'g',.1],
  ['+',1115,752,1144,784,'p'],['D',1176,745,1221,787,'p',.1],['[',1237,747,1270,798,'p',.1],['X',1264,754,1288,785,'p'],['k',1301,744,1331,784,'p',.25],['-',1339,772,1357,775,'p'],['1',1373,760,1385,783,'p',.25],[',',1408,785,1414,805,'p'],['X',1438,749,1455,782,'p'],['k',1469,736,1497,777,'p',.25],[']',1508,739,1536,793,'p',.12],[')',1515,709,1547,831,'p',.04]
];

const pen = 3.4;
// Thickness of a hairline stem in the 100px glyphs.
const stem = 2.6;
// The widest each narrow glyph may be stretched relative to its height.
const maxStretch = { '[': 2, ']': 2, '(': 1.7, ')': 1.7, 'i': 1.4, 'j': 1.4, ',': 1.4, '1': 1.6 };
const meter = document.createElement('canvas').getContext('2d');
meter.font = '100 100px Inter, Roboto, sans-serif';
const layer = document.getElementById('writing');

for (const [char, x1, y1, x2, y2, colour, slant = 0] of marks) {
  const m = meter.measureText(char);
  const left = -m.actualBoundingBoxLeft;
  const top = -m.actualBoundingBoxAscent;
  const width = m.actualBoundingBoxRight - left;
  const height = m.actualBoundingBoxDescent - top;
  const boxH = Math.max(y2 - y1 - pen, 0.8);
  const boxW = Math.max(x2 - x1 - pen, 0.6);
  const sy = boxH / height;
  // A slanted mark spends part of its width on the lean.
  let lean = Math.min(slant * boxH, boxW * 0.6);
  const sx = Math.min((boxW - lean) / width, sy * (maxStretch[char] || 9));
  if (maxStretch[char] && slant) lean = Math.min(boxW - sx * width, boxH * 0.45);
  const spare = (boxW - lean - sx * width) / 2;
  const shear = lean / height;
  const tx = x1 + pen / 2 + spare - sx * left - shear * top;
  const ty = y1 + pen / 2 - sy * top;
  const scale = sx ** 0.65 * sy ** 0.35;
  const text = document.createElementNS('http://www.w3.org/2000/svg', 'text');
  text.setAttribute('class', 'hand ' + colour);
  text.setAttribute('transform', `matrix(${sx} 0 ${shear} ${sy} ${tx} ${ty})`);
  text.setAttribute('stroke-width', Math.max(pen / scale - stem, 0.8));
  text.textContent = char;
  layer.append(text);
}
```
